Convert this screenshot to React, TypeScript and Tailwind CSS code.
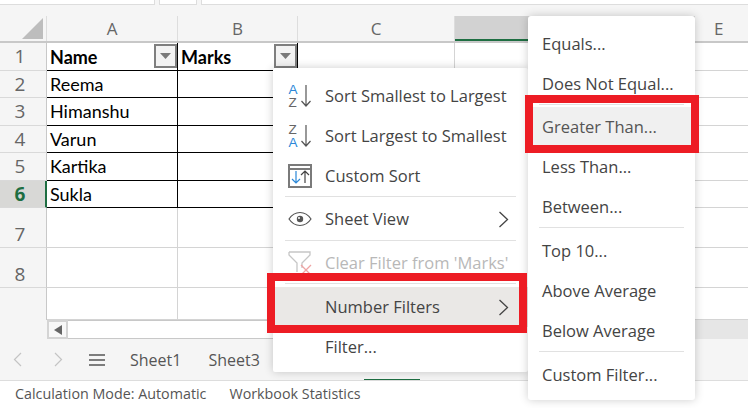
import { ReactNode } from 'react';

const rows = [
    { n: 1, h: 'h-[28px]', name: 'Name', strong: true },
    { n: 2, h: 'h-[27px]', name: 'Reema' },
    { n: 3, h: 'h-[28px]', name: 'Himanshu' },
    { n: 4, h: 'h-[27px]', name: 'Varun' },
    { n: 5, h: 'h-[28px]', name: 'Kartika' },
    { n: 6, h: 'h-[27px]', name: 'Sukla' },
    { n: 7, h: 'h-[40px]' },
    { n: 8, h: 'h-[40px]' },
    { n: 0, h: 'h-[32px]' },
];

function FilterButton() {
    return (
        <div className="absolute right-0 top-[1px] flex h-[24px] w-[23px] items-center justify-center border-2 border-[#7f7f7f] bg-[#f3f3f3]">
            <svg width="11" height="6" viewBox="0 0 11 6"><path d="M0 0h11L5.5 6z" fill="#7a7a7a" /></svg>
        </div>
    );
}

function SheetRow({ n, h, name, strong }: { n: number; h: string; name?: string; strong?: boolean }) {
    const data = n > 0 && n <= 6;
    const line = data ? 'border-black' : 'border-[#d4d4d4]';
    return (
        <div className={`flex ${h}`}>
            <div className={`flex w-[47px] shrink-0 pl-[8px] text-[19px] ${data ? 'items-center' : 'items-end leading-[26px]'} ${n === 6 ? 'border-r-2 border-r-[#1e6e42] bg-[#d8d8d6] font-bold text-[#1e6e42]' : 'border-r border-r-[#c8c8c8] text-[#666666]'} ${n === 0 ? 'border-b-0' : 'border-b border-b-[#d9d9d9]'}`}>
                <span className="w-[24px] text-center">{n > 0 ? n : ''}</span>
            </div>
            <div className={`relative flex w-[131px] shrink-0 items-center border-r border-b bg-white pl-[3px] text-[18px] text-black ${line} ${strong ? 'pt-[2px] font-bold' : ''}`} style={{ fontFamily: 'Lato, sans-serif' }}>
                {name}
                {strong && <FilterButton />}
            </div>
            <div className={`relative flex w-[120px] shrink-0 items-center border-r border-b bg-white pl-[3px] text-[18px] font-bold text-black ${line} ${strong ? 'pt-[2px]' : ''}`} style={{ fontFamily: 'Lato, sans-serif' }}>
                {strong && 'Marks'}
                {strong && <FilterButton />}
            </div>
            <div className="w-[157px] shrink-0 border-r border-b border-[#d4d4d4] bg-white" />
            <div className="w-[240px] shrink-0 border-r border-b border-[#d4d4d4] bg-white" />
            <div className="flex-1 border-b border-[#d4d4d4] bg-white" />
        </div>
    );
}

function Chevron() {
    return (
        <svg className="ml-auto mr-[19px]" width="11" height="17" viewBox="0 0 11 17" fill="none" stroke="#444444" strokeWidth="1.3">
            <path d="M1.5 1l8 7.5-8 7.5" />
        </svg>
    );
}

function SortIcon({ top, bottom }: { top: string; bottom: string }) {
    return (
        <svg width="24" height="32" viewBox="0 0 24 32" fontFamily="Liberation Sans, sans-serif" fontSize="13.5">
            <text x="0.500" y="14" fill={top === 'A' ? '#2b88d8' : '#666666'}>{top}</text>
            <text x="0.500" y="27" fill={bottom === 'A' ? '#2b88d8' : '#666666'}>{bottom}</text>
            <path d="M18 5v21M13.500 21l4.500 5 4.500-5" fill="none" stroke="#555555" strokeWidth="1.2" />
        </svg>
    );
}

function CustomSortIcon() {
    return (
        <svg width="24" height="24" viewBox="0 0 24 24" fill="none">
            <rect x="1" y="1" width="22" height="22" stroke="#7a7a7a" strokeWidth="2" />
            <path d="M1 5h22" stroke="#7a7a7a" strokeWidth="2" />
            <path d="M8 7v12M4 15l4 4 4-4" stroke="#2b88d8" strokeWidth="1.2" />
            <path d="M17 19V7M13 11l4-4 4 4" stroke="#444444" strokeWidth="1.2" />
        </svg>
    );
}

function EyeIcon() {
    return (
        <svg width="24" height="16" viewBox="0 0 24 16" fill="none" stroke="#555555" strokeWidth="1.2">
            <path d="M1 8c3-4.500 7-6.500 11-6.500S20 3.500 23 8c-3 4.500-7 6.500-11 6.500S4 12.500 1 8z" />
            <circle cx="12" cy="8" r="3.200" fill="#555555" stroke="none" />
            <circle cx="11" cy="7" r="1" fill="#ffffff" stroke="none" />
        </svg>
    );
}

function ClearFilterIcon() {
    return (
        <svg width="24" height="24" viewBox="0 0 24 24" fill="none">
            <path d="M1 1h21v3l-8 8v5M1 1v3l8 8v9" stroke="#c6c6c6" strokeWidth="1.300" />
            <path d="M13 14l10 10M23 14L13 24" stroke="#efa4a4" strokeWidth="1.300" />
        </svg>
    );
}

function Item({ icon, label, arrow, muted, active }: { icon?: ReactNode; label: string; arrow?: boolean; muted?: boolean; active?: boolean }) {
    return (
        <div className={`flex h-[40px] items-center ${active ? 'bg-[#eae8e6]' : ''} ${muted ? 'text-[#b8b8b8]' : 'text-[#444444]'}`}>
            <div className="flex w-[52px] shrink-0 justify-center pl-[1px]">{icon}</div>
            <span className="whitespace-nowrap">{label}</span>
            {arrow && <Chevron />}
        </div>
    );
}

function SubItem({ label, active }: { label: string; active?: boolean }) {
    return <div className={`flex h-[40px] items-center whitespace-nowrap pl-[14px] ${active ? 'bg-[#f0f0f0] text-[#555555]' : ''}`}>{label}</div>;
}

export default function App() {
    return (
        <div className="relative flex h-[408px] w-[748px] flex-col overflow-hidden bg-[#f5f5f5]" style={{ fontFamily: '"Open Sans", sans-serif' }}>
            <div className="flex h-[16px] shrink-0 items-start gap-[4px] pr-0">
                <div className="h-[5px] w-[155px] border-r border-b border-[#dddddd] bg-white" />
                <div className="h-[5px] w-[38px] border-x border-b border-[#dddddd] bg-white" />
                <div className="h-[5px] flex-1 border-l border-b border-[#dddddd] bg-white" />
            </div>

            <div className="flex h-[27px] shrink-0 border-b-2 border-[#c8c8c8] text-[17px] text-[#666666]">
                <div className="flex w-[47px] items-end justify-end border-r border-[#dddddd] pr-[3px] pb-[2px]">
                    <svg width="21" height="21" viewBox="0 0 21 21"><path d="M21 0v21H0z" fill="#bdbdbd" /></svg>
                </div>
                <div className="flex w-[131px] items-center justify-center border-r border-[#dddddd]">A</div>
                <div className="flex w-[120px] items-center justify-center border-r border-[#dddddd]">B</div>
                <div className="flex w-[157px] items-center justify-center border-r border-[#dddddd]">C</div>
                <div className="w-[240px] border-b-2 border-[#1e6e42] bg-[#d2d2d2]" />
                <div className="flex flex-1 items-center pl-[19px]">E</div>
            </div>

            <div className="shrink-0">
                {rows.map((r) => (
                    <SheetRow key={r.n} n={r.n} h={r.h} name={r.name} strong={r.strong} />
                ))}
            </div>

            <div className="flex h-[19px] shrink-0 pl-[47px]">
                <div className="flex w-[21px] items-center justify-center border-2 border-[#d4d4d4] bg-[#f8f8f8]">
                    <svg width="8" height="10" viewBox="0 0 8 10"><path d="M8 0v10L0 5z" fill="#666666" /></svg>
                </div>
                <div className="flex-1 border-y border-[#c8c8c8] bg-white" />
                <div className="w-[160px] bg-[#e6e6e6]" />
            </div>

            <div className="relative flex flex-1 items-center border-b border-[#dddddd] text-[16px] text-[#555555]">
                <svg className="ml-[13px]" width="9" height="15" viewBox="0 0 9 15" fill="none" stroke="#c4c4c4" strokeWidth="1.200"><path d="M8 1L1.500 7.500 8 14" /></svg>
                <svg className="ml-[32px]" width="9" height="15" viewBox="0 0 9 15" fill="none" stroke="#c4c4c4" strokeWidth="1.200"><path d="M1 1l6.500 6.500L1 14" /></svg>
                <svg className="ml-[26px]" width="16" height="12" viewBox="0 0 16 12" stroke="#555555" strokeWidth="1.300"><path d="M0 1h16M0 6h16M0 11h16" /></svg>
                <span className="ml-[25px]">Sheet1</span>
                <span className="ml-[27px]">Sheet3</span>
                <div className="absolute bottom-0 left-[364px] h-[1px] w-[56px] bg-[#1e6e42]" />
            </div>

            <div className="flex h-[27px] shrink-0 items-center gap-[23px] bg-white pb-[2px] pl-[15px] text-[14.300px] text-[#555555]">
                <span>Calculation Mode: Automatic</span>
                <span>Workbook Statistics</span>
            </div>

            <div className="absolute left-[273px] top-[68px] h-[304px] w-[255px] rounded-[2px] bg-white pt-[8px] text-[16.500px] shadow-[0_0_10px_rgba(0,0,0,0.2)]">
                <Item icon={<SortIcon top="A" bottom="Z" />} label="Sort Smallest to Largest" />
                <Item icon={<SortIcon top="Z" bottom="A" />} label="Sort Largest to Smallest" />
                <Item icon={<CustomSortIcon />} label="Custom Sort" />
                <div className="mx-[12px] mt-[0px] mb-[2px] h-[1px] bg-[#e1e1e1]" />
                <Item icon={<EyeIcon />} label="Sheet View" arrow />
                <div className="mx-[12px] mt-[1px] mb-[2px] h-[1px] bg-[#e1e1e1]" />
                <Item icon={<ClearFilterIcon />} label="Clear Filter from 'Marks'" muted />
                <div className="mx-[12px] mb-[3px] h-[1px] bg-[#e1e1e1]" />
                <Item label="Number Filters" arrow active />
                <Item label="Filter..." />
            </div>

            <div className="absolute left-[528px] top-[16px] h-[384px] w-[167px] rounded-[3px] bg-white pt-[8px] text-[16.500px] text-[#444444] shadow-[0_0_10px_rgba(0,0,0,0.2)]">
                <SubItem label="Equals..." />
                <SubItem label="Does Not Equal..." />
                <div className="mx-[11px] mb-[2px] h-[1px] bg-[#e1e1e1]" />
                <SubItem label="Greater Than..." active />
                <SubItem label="Less Than..." />
                <SubItem label="Between..." />
                <div className="mx-[11px] mb-[3px] h-[1px] bg-[#e1e1e1]" />
                <SubItem label="Top 10..." />
                <SubItem label="Above Average" />
                <SubItem label="Below Average" />
                <div className="mx-[11px] mb-[3px] h-[1px] bg-[#e1e1e1]" />
                <SubItem label="Custom Filter..." />
            </div>

            <div className="absolute left-[267px] top-[273px] h-[60px] w-[260px] border-8 border-[#ed1c24]" />
            <div className="absolute left-[525px] top-[95px] h-[58px] w-[174px] border-8 border-[#ed1c24]" />
        </div>
    );
}
